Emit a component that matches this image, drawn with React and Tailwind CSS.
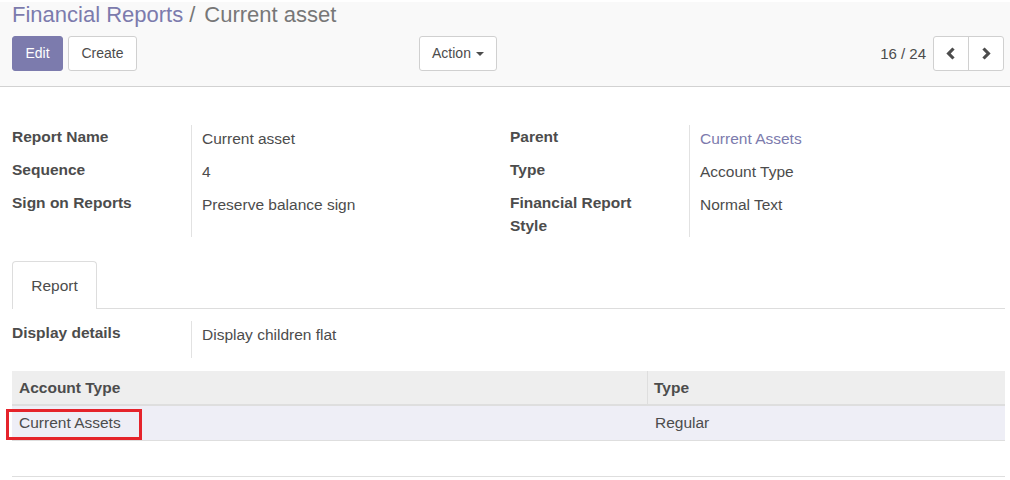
import React from "react";

function ChevronLeft() {
  return (
    <svg width="10" height="13" viewBox="0 0 10 13">
      <polyline points="7.5,1.5 2.6,6.5 7.5,11.5" fill="none" stroke="#4c4c4c" strokeWidth="3.2" strokeLinecap="butt" strokeLinejoin="miter" />
    </svg>
  );
}
function ChevronRight() {
  return (
    <svg width="10" height="13" viewBox="0 0 10 13">
      <polyline points="2.5,1.5 7.4,6.5 2.5,11.5" fill="none" stroke="#4c4c4c" strokeWidth="3.2" strokeLinecap="butt" strokeLinejoin="miter" />
    </svg>
  );
}

export default function App() {
  const label = "font-bold leading-[23px] border-r border-[#e2e2e2]";
  const value = "pl-[10px] pt-[2px] leading-[23px]";
  return (
    <div className="w-[1010px] h-[480px] bg-white overflow-hidden text-[#4c4c4c] font-['Liberation_Sans',Arial,sans-serif]">
      {/* Control panel */}
      <div className="bg-[#f9f9f9] border-b border-[#d2d2d2] h-[85px] pl-[12px] pr-[6px]">
        <div className="mt-[2px] h-[26px] leading-[26px] text-[22px] flex whitespace-nowrap">
          <span className="text-[#7c7bad]">Financial Reports</span>
          <span className="ml-[6px] text-[#777777]">/</span>
          <span className="ml-[9px] text-[#777777]">Current asset</span>
        </div>
        <div className="mt-[8px] flex items-start text-[14px]">
          <div className="w-[407px] flex gap-[5px]">
            <div className="w-[51px] h-[35px] rounded-[3px] bg-[#7c7bad] border border-[#7c7bad] text-white flex items-center justify-center">Edit</div>
            <div className="w-[69px] h-[35px] rounded-[3px] bg-white border border-[#d0d0d0] flex items-center justify-center">Create</div>
          </div>
          <div className="w-[78px] h-[35px] rounded-[3px] bg-white border border-[#d0d0d0] flex items-center justify-center">
            <span>Action</span>
            <span className="ml-[5px] w-0 h-0 border-t-[4px] border-t-[#4c4c4c] border-x-[4px] border-x-transparent"></span>
          </div>
          <div className="ml-auto flex items-center">
            <span className="text-[15px] leading-[35px]">16 / 24</span>
            <div className="ml-[7px] flex h-[35px] rounded-[3px] border border-[#d0d0d0] bg-white">
              <div className="w-[35px] flex items-center justify-center border-r border-[#d0d0d0]"><ChevronLeft /></div>
              <div className="w-[34px] flex items-center justify-center"><ChevronRight /></div>
            </div>
          </div>
        </div>
      </div>

      {/* Sheet */}
      <div className="pl-[12px] pr-[5px] pt-[38px] text-[15.5px]">
        <div className="grid grid-cols-[180px_318px_180px_1fr]">
          <div className={label + " pb-[10px]"}>Report Name</div>
          <div className={value}>Current asset</div>
          <div className={label + " pb-[10px]"}>Parent</div>
          <div className={value + " text-[#7c7bad]"}>Current Assets</div>

          <div className={label + " pb-[10px]"}>Sequence</div>
          <div className={value}>4</div>
          <div className={label + " pb-[10px]"}>Type</div>
          <div className={value}>Account Type</div>

          <div className={label}>Sign on Reports</div>
          <div className={value}>Preserve balance sign</div>
          <div className={label}>Financial Report<br />Style</div>
          <div className={value}>Normal Text</div>
        </div>

        {/* Tabs */}
        <div className="mt-[24px] h-[48px] flex border-b border-[#dddddd]">
          <div className="w-[85px] h-[48px] -mb-px bg-white border border-b-0 border-[#dddddd] rounded-t-[4px] flex items-center justify-center pt-[1px]">Report</div>
        </div>

        <div className="mt-[12px] flex">
          <div className="w-[180px] h-[37px] font-bold leading-[23px] border-r border-[#e2e2e2]">Display details</div>
          <div className="pl-[10px] pt-[2px] leading-[23px]">Display children flat</div>
        </div>

        {/* Table */}
        <div className="mt-[13px]">
          <div className="flex h-[35px] bg-[#eeeeee] border-b-2 border-[#dedede] font-bold">
            <div className="w-[636px] pl-[7px] flex items-center border-r border-[#dedede]">Account Type</div>
            <div className="flex-1 pl-[6px] flex items-center">Type</div>
          </div>
          <div className="relative flex h-[35px] bg-[#eeeef6] border-b border-[#dedede]">
            <div className="w-[636px] pl-[7px] flex items-center">Current Assets</div>
            <div className="flex-1 pl-[7px] flex items-center">Regular</div>
            <div className="absolute left-[-6px] top-[3px] w-[136px] h-[31px] border-[3px] border-[#e5232b]"></div>
          </div>
          <div className="h-[36px] border-b border-[#dedede]"></div>
        </div>
      </div>
    </div>
  );
}
